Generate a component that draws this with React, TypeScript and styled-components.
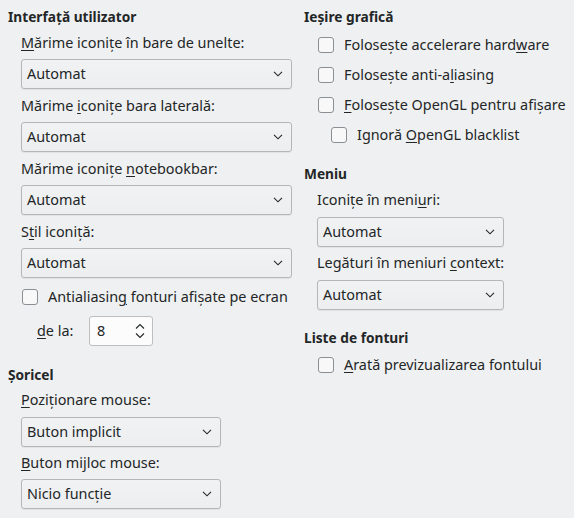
import React from "react";
import styled, { createGlobalStyle } from "styled-components";

const GlobalStyle = createGlobalStyle`
  html, body { margin: 0; padding: 0; background: #eff0f1; }
  body {
    font-family: "Noto Sans", "DejaVu Sans", sans-serif;
    font-size: 14.4px;
    line-height: 18px;
    color: #232627;
  }
  * { box-sizing: border-box; }
`;

const Page = styled.div`
  width: 574px;
  height: 518px;
  padding: 8px 0 0 8px;
  display: grid;
  grid-template-columns: 296px 1fr;
  align-items: start;
`;

const Column = styled.div`
  display: flex;
  flex-direction: column;
`;

const Section = styled.section<{ $mt?: number }>`
  display: flex;
  flex-direction: column;
  margin-top: ${(p) => p.$mt ?? 0}px;
`;

const Title = styled.h3`
  margin: 0;
  font-size: 13.7px;
  font-weight: 700;
  line-height: 18px;
`;

const Body = styled.div<{ $mt: number; $gap: number }>`
  display: flex;
  flex-direction: column;
  padding-left: 13px;
  margin-top: ${(p) => p.$mt}px;
  gap: ${(p) => p.$gap}px;
`;

const Field = styled.div<{ $gap: number }>`
  display: flex;
  flex-direction: column;
  gap: ${(p) => p.$gap}px;
`;

const Label = styled.span`
  height: 18px;
  white-space: nowrap;
`;

const Mn = styled.span`
  text-decoration: underline;
  text-decoration-thickness: 1px;
  text-underline-offset: 2px;
`;

const Combo = styled.div<{ $w: number }>`
  position: relative;
  width: ${(p) => p.$w}px;
  height: 30px;
  border: 1px solid #b4b6b8;
  border-radius: 3px;
  background: linear-gradient(#f1f2f3, #eceef0);
  box-shadow: 0 1px 1px rgba(0, 0, 0, 0.06);
  display: flex;
  align-items: center;
  padding: 0 8px 0 5px;
  justify-content: space-between;
`;

const ComboText = styled.span`
  white-space: nowrap;
`;

const Chevron = styled.svg`
  width: 10px;
  height: 6px;
  flex: none;
`;

const CheckRow = styled.label<{ $mt?: number; $indent?: number }>`
  display: flex;
  align-items: center;
  gap: 10px;
  height: 18px;
  padding-left: ${(p) => 1 + (p.$indent ?? 0)}px;
  margin-top: ${(p) => p.$mt ?? 0}px;
  white-space: nowrap;
`;

const Box = styled.span`
  width: 16px;
  height: 16px;
  flex: none;
  border: 1px solid #8c8f92;
  border-radius: 3px;
  background: #f8f8f9;
`;

const SpinRow = styled.div<{ $mt: number }>`
  display: flex;
  align-items: center;
  padding-left: 16px;
  margin-top: ${(p) => p.$mt}px;
`;

const SpinLabel = styled.span`
  width: 52px;
  white-space: nowrap;
`;

const Spin = styled.div`
  width: 64px;
  height: 30px;
  border: 1px solid #bcbec0;
  border-radius: 3px;
  background: #fcfcfc;
  display: flex;
  align-items: center;
  justify-content: space-between;
  padding: 0 7px 0 7px;
`;

const SpinArrows = styled.svg`
  width: 10px;
  height: 16px;
  flex: none;
`;

const Arrow = () => (
  <Chevron viewBox="0 0 10 6">
    <polyline points="1,0.8 5,4.8 9,0.8" fill="none" stroke="#232627" strokeWidth="1.1" />
  </Chevron>
);

const Select = ({ w, value }: { w: number; value: string }) => (
  <Combo $w={w}>
    <ComboText>{value}</ComboText>
    <Arrow />
  </Combo>
);

const Check = ({ children, mt, indent }: { children: React.ReactNode; mt?: number; indent?: number }) => (
  <CheckRow $mt={mt} $indent={indent}>
    <Box />
    <span>{children}</span>
  </CheckRow>
);

export default function App() {
  return (
    <>
      <GlobalStyle />
      <Page>
        <Column>
          <Section>
            <Title>Interfață utilizator</Title>
            <Body $mt={8} $gap={8}>
              <Field $gap={7}>
                <Label><Mn>M</Mn>ărime iconițe în bare de unelte:</Label>
                <Select w={271} value="Automat" />
              </Field>
              <Field $gap={7}>
                <Label>Mărime <Mn>i</Mn>conițe bara laterală:</Label>
                <Select w={271} value="Automat" />
              </Field>
              <Field $gap={7}>
                <Label>Mărime iconițe <Mn>n</Mn>otebookbar:</Label>
                <Select w={271} value="Automat" />
              </Field>
              <Field $gap={7}>
                <Label>S<Mn>t</Mn>il iconiță:</Label>
                <Select w={271} value="Automat" />
              </Field>
              <Check mt={2}>Antialiasin<Mn>g</Mn> fonturi afișate pe ecran</Check>
              <SpinRow $mt={2}>
                <SpinLabel><Mn>d</Mn>e la:</SpinLabel>
                <Spin>
                  <span>8</span>
                  <SpinArrows viewBox="0 0 10 16">
                    <polyline points="1,5.5 5,1.5 9,5.5" fill="none" stroke="#232627" strokeWidth="1.1" />
                    <polyline points="1,10.5 5,14.5 9,10.5" fill="none" stroke="#232627" strokeWidth="1.1" />
                  </SpinArrows>
                </Spin>
              </SpinRow>
            </Body>
          </Section>
          <Section $mt={20}>
            <Title>Șoricel</Title>
            <Body $mt={7} $gap={7}>
              <Field $gap={8}>
                <Label><Mn>P</Mn>oziționare mouse:</Label>
                <Select w={200} value="Buton implicit" />
              </Field>
              <Field $gap={7}>
                <Label><Mn>B</Mn>uton mijloc mouse:</Label>
                <Select w={200} value="Nicio funcție" />
              </Field>
            </Body>
          </Section>
        </Column>
        <Column>
          <Section>
            <Title>Ieșire grafică</Title>
            <Body $mt={10} $gap={12}>
              <Check>Folosește accelerare hard<Mn>w</Mn>are</Check>
              <Check>Folosește anti-a<Mn>l</Mn>iasing</Check>
              <Check><Mn>F</Mn>olosește OpenGL pentru afișare</Check>
              <Check indent={13}>Ignoră <Mn>O</Mn>penGL blacklist</Check>
            </Body>
          </Section>
          <Section $mt={21}>
            <Title>Meniu</Title>
            <Body $mt={8} $gap={7}>
              <Field $gap={8}>
                <Label>Iconițe în meni<Mn>u</Mn>ri:</Label>
                <Select w={187} value="Automat" />
              </Field>
              <Field $gap={8}>
                <Label>Legături în meniuri <Mn>c</Mn>ontext:</Label>
                <Select w={187} value="Automat" />
              </Field>
            </Body>
          </Section>
          <Section $mt={19}>
            <Title>Liste de fonturi</Title>
            <Body $mt={9} $gap={0}>
              <Check><Mn>A</Mn>rată previzualizarea fontului</Check>
            </Body>
          </Section>
        </Column>
      </Page>
    </>
  );
}
